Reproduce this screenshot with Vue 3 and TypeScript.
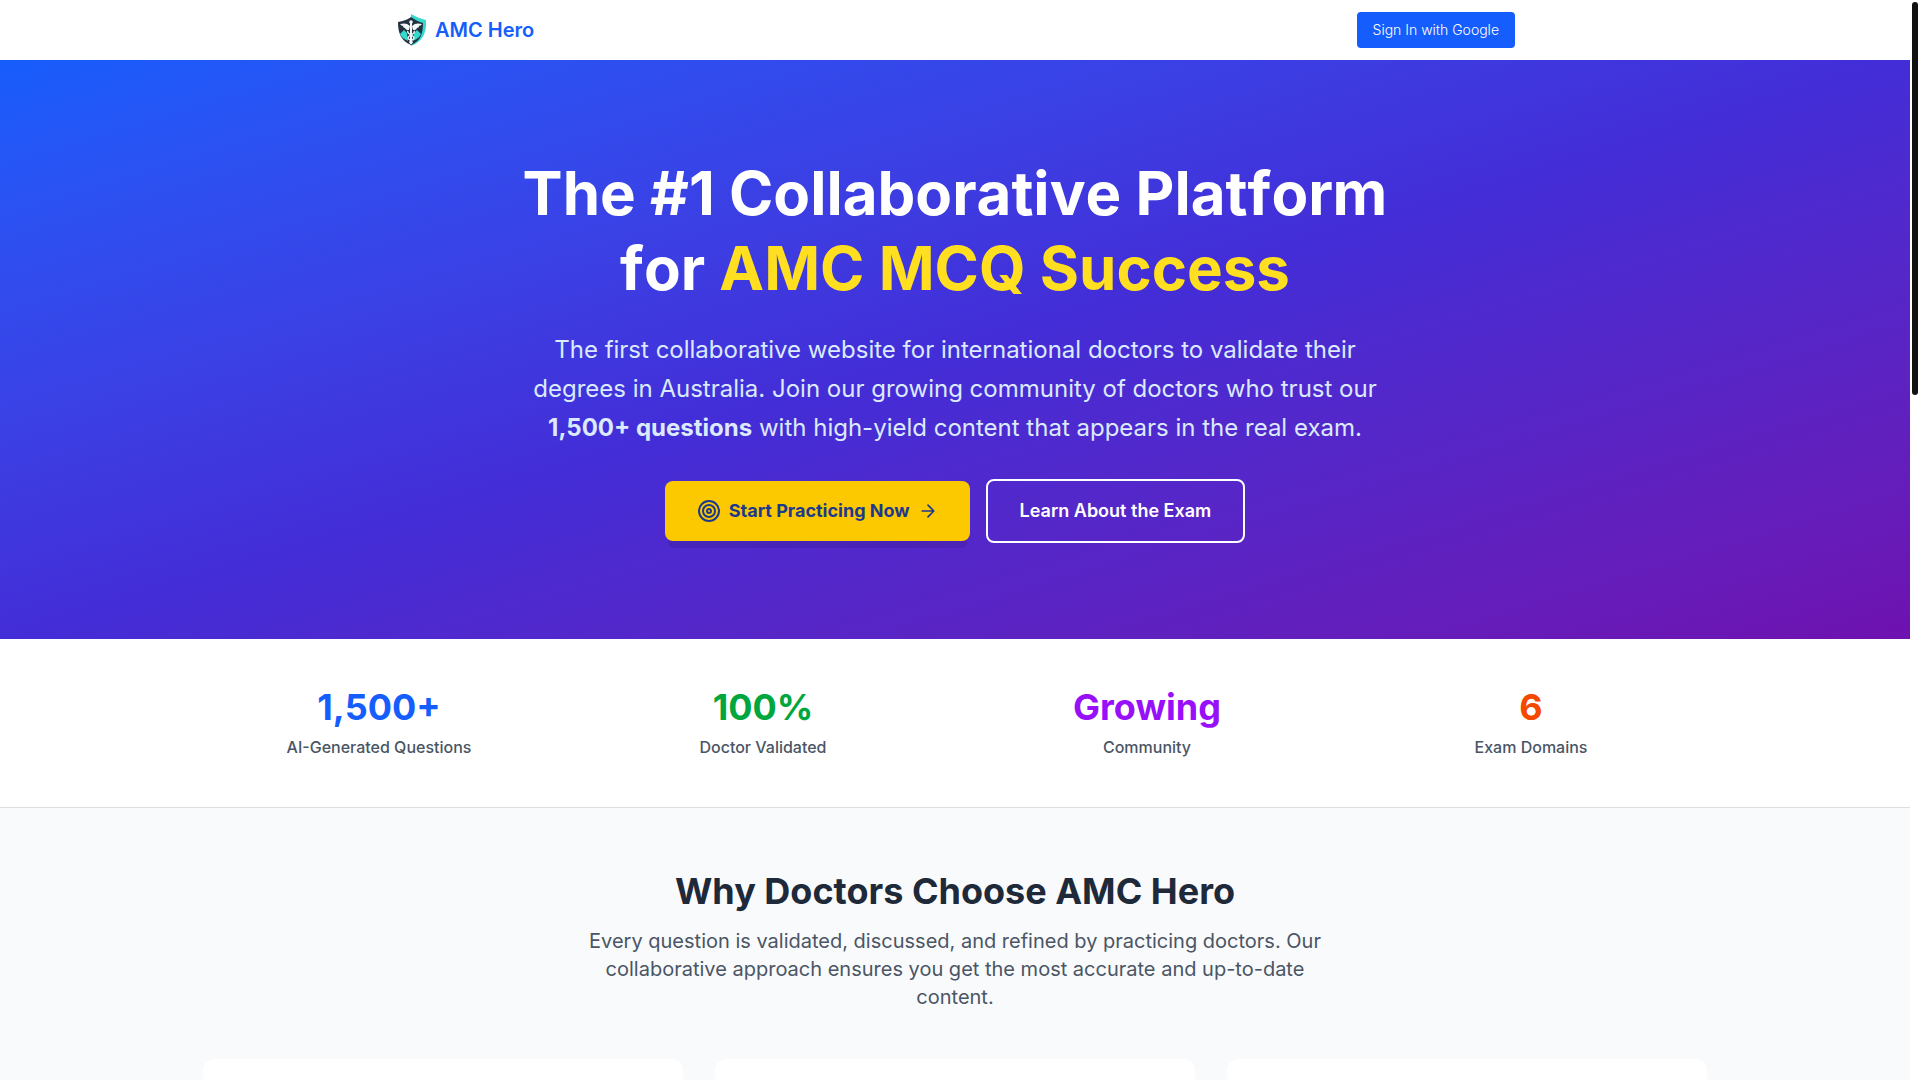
<script setup lang="ts">
interface Stat {
  value: string
  label: string
  tone: string
}

const stats: Stat[] = [
  { value: '1,500+', label: 'AI-Generated Questions', tone: 'blue' },
  { value: '100%', label: 'Doctor Validated', tone: 'green' },
  { value: 'Growing', label: 'Community', tone: 'purple' },
  { value: '6', label: 'Exam Domains', tone: 'orange' },
]

const cardCount = 3
</script>

<template>
  <div class="page">
    <div class="content">
      <header class="nav">
        <div class="nav-inner">
          <a class="brand" href="#">
            <svg class="logo" viewBox="0 0 32 32" aria-hidden="true">
              <path d="M16 0C21 3 26 5 31 6C32 19 27 28 16 32Z" fill="#35d9cd" />
              <path d="M16 3C12 6 8 7 3 8C3 19 6 27 16 31C26 27 28 19 28 9C24 8 20 6 16 3Z" fill="#22303f" />
              <path d="M5 20L9 16L12 19L13 27C9 25 6 23 5 20Z" fill="#35d9cd" />
              <path d="M26 20L22 16L19 19L18 27C22 25 25 23 26 20Z" fill="#35d9cd" />
              <path d="M15 12C12 9 9 9 5 10C6 11 7 12 8 12C8 13 9 14 10 14C11 16 12 16 14 16Z" fill="#f4f7f8" />
              <path d="M17 12C20 9 23 9 27 10C26 11 25 12 24 12C24 13 23 14 22 14C21 16 20 16 18 16Z" fill="#f4f7f8" />
              <path d="M16 8V30" stroke="#f4f7f8" stroke-width="2" />
              <path d="M13 17C11 20 19 21 19 24C19 26 14 26 15 29M19 17C21 20 13 21 13 24C13 26 18 26 17 29" fill="none" stroke="#f4f7f8" stroke-width="1.4" />
              <circle cx="16" cy="8" r="1.8" fill="#f4f7f8" />
            </svg>
            <span>AMC Hero</span>
          </a>
          <button class="sign-in" type="button">Sign In with Google</button>
        </div>
      </header>

      <main>
        <section class="hero">
          <div class="hero-inner">
            <h1>The #1 Collaborative Platform<br />for <span class="highlight">AMC MCQ Success</span></h1>
            <p>
              The first collaborative website for international doctors to validate their degrees in Australia. Join
              our growing community of doctors who trust our <strong>1,500+ questions</strong> with high-yield content
              that appears in the real exam.
            </p>
            <div class="actions">
              <button class="primary" type="button">
                <svg class="target" viewBox="0 0 24 24" aria-hidden="true">
                  <circle cx="12" cy="12" r="10" />
                  <circle cx="12" cy="12" r="6" />
                  <circle cx="12" cy="12" r="2" />
                </svg>
                <span>Start Practicing Now</span>
                <svg class="arrow" viewBox="0 0 24 24" aria-hidden="true">
                  <path d="M5 12h14M12 5l7 7-7 7" />
                </svg>
              </button>
              <a class="secondary" href="#exam">Learn About the Exam</a>
            </div>
          </div>
        </section>

        <section class="stats">
          <div class="stats-grid">
            <div v-for="stat in stats" :key="stat.label" class="stat">
              <div class="stat-value" :class="stat.tone">{{ stat.value }}</div>
              <div class="stat-label">{{ stat.label }}</div>
            </div>
          </div>
        </section>

        <section id="exam" class="features">
          <div class="features-inner">
            <h2>Why Doctors Choose AMC Hero</h2>
            <p>
              Every question is validated, discussed, and refined by practicing doctors. Our collaborative approach
              ensures you get the most accurate and up-to-date content.
            </p>
            <div class="cards">
              <article v-for="n in cardCount" :key="n" class="card"></article>
            </div>
          </div>
        </section>
      </main>
    </div>
    <div class="scroll-track" aria-hidden="true">
      <div class="scroll-thumb"></div>
    </div>
  </div>
</template>

<style>
body {
  margin: 0;
  overflow: hidden;
}
</style>

<style scoped>
.page {
  display: flex;
  height: 100vh;
  overflow: hidden;
  background: #fff;
  color: #1e2939;
  font-family: Inter, "Liberation Sans", sans-serif;
  font-size: 16px;
  line-height: 24px;
}

.content {
  flex: 1;
  min-width: 0;
}

.scroll-track {
  width: 10px;
  box-sizing: border-box;
  padding: 2px;
  background: #fff;
}

.scroll-thumb {
  width: 6px;
  height: 393px;
  border-radius: 3px;
  background: #111;
}

h1,
h2,
p {
  margin: 0;
}

button {
  border: 0;
  font-family: inherit;
  cursor: pointer;
}

a {
  text-decoration: none;
}

.nav-inner {
  display: flex;
  align-items: center;
  justify-content: space-between;
  box-sizing: border-box;
  max-width: 1152px;
  height: 60px;
  margin: 0 auto;
  padding: 0 16px;
}

.brand {
  display: flex;
  align-items: center;
  gap: 8px;
  color: #155dfc;
  font-size: 20px;
  font-weight: 600;
  line-height: 28px;
}

.logo {
  width: 32px;
  height: 32px;
}

.sign-in {
  padding: 8px 16px;
  border-radius: 4px;
  background: #155dfc;
  color: #fff;
  font-size: 14px;
  font-weight: 300;
  line-height: 20px;
}

.hero {
  padding: 96px 16px;
  background: linear-gradient(to bottom right in oklab, #155dfc, #432dd7, #6e11b0);
  color: #fff;
  text-align: center;
}

.hero-inner {
  max-width: 896px;
  margin: 0 auto;
}

h1 {
  margin-bottom: 24px;
  font-size: 60px;
  font-weight: 700;
  line-height: 75px;
  font-kerning: none;
}

.highlight {
  color: #ffdf20;
}

.hero p {
  margin-bottom: 32px;
  color: #dbeafe;
  font-size: 24px;
  line-height: 39px;
}

.hero strong {
  font-weight: 700;
}

.actions {
  display: flex;
  flex-wrap: wrap;
  align-items: center;
  justify-content: center;
  gap: 16px;
}

.primary,
.secondary {
  display: flex;
  align-items: center;
  gap: 8px;
  padding: 16px 32px;
  border-radius: 8px;
  font-size: 18px;
  font-weight: 600;
  line-height: 28px;
}

.primary {
  background: #fcc800;
  box-shadow: 0 10px 0 -3px rgba(0, 0, 0, 0.1);
  color: #1c398e;
  font-weight: 700;
}

.primary svg {
  fill: none;
  stroke: currentColor;
  stroke-width: 2;
  stroke-linecap: round;
  stroke-linejoin: round;
}

.target {
  width: 24px;
  height: 24px;
}

.arrow {
  width: 20px;
  height: 20px;
}

.secondary {
  border: 2px solid #fff;
  color: #fff;
}

.stats {
  padding: 48px 16px;
}

.stats-grid {
  display: grid;
  grid-template-columns: repeat(4, 1fr);
  gap: 32px;
  max-width: 1504px;
  margin: 0 auto;
  text-align: center;
}

.stat-value {
  margin-bottom: 8px;
  font-size: 36px;
  font-weight: 700;
  line-height: 40px;
}

.blue {
  color: #155dfc;
}

.green {
  color: #00a63e;
}

.purple {
  color: #9810fa;
}

.orange {
  color: #f54900;
}

.stat-label {
  color: #4a5565;
  font-weight: 500;
}

.features {
  padding: 64px 16px;
  background: #f9fafb;
  box-shadow: inset 0 1px 0 #dddee1;
  text-align: center;
}

.features-inner {
  max-width: 1504px;
  margin: 0 auto;
}

h2 {
  margin-bottom: 16px;
  font-size: 36px;
  font-weight: 700;
  line-height: 40px;
}

.features p {
  max-width: 768px;
  margin: 0 auto 48px;
  color: #4a5565;
  font-size: 20px;
  line-height: 28px;
}

.cards {
  display: grid;
  grid-template-columns: repeat(3, 1fr);
  gap: 32px;
}

.card {
  min-height: 240px;
  border-radius: 12px;
  background: #fff;
}
</style>
